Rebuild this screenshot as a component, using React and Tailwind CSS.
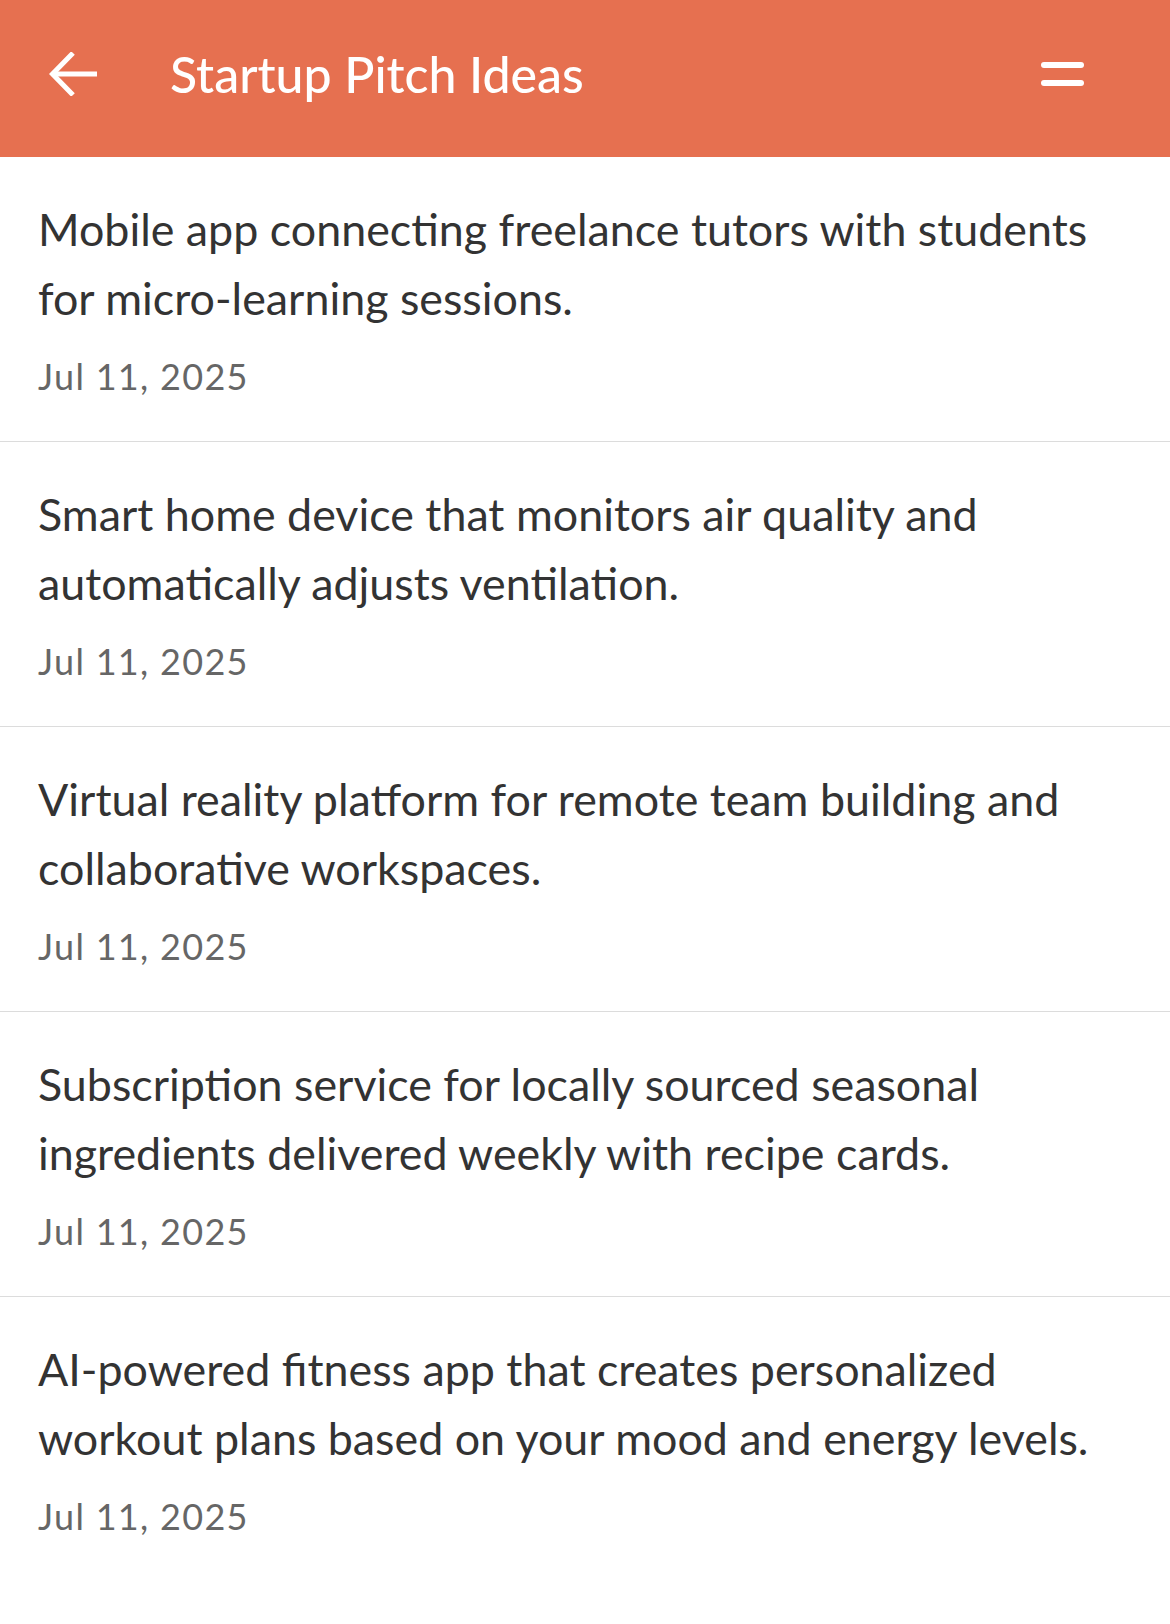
const ideas = [
  "Mobile app connecting freelance tutors with students for micro-learning sessions.",
  "Smart home device that monitors air quality and automatically adjusts ventilation.",
  "Virtual reality platform for remote team building and collaborative workspaces.",
  "Subscription service for locally sourced seasonal ingredients delivered weekly with recipe cards.",
  "AI-powered fitness app that creates personalized workout plans based on your mood and energy levels.",
];

const BackArrow = () => (
  <svg width="48" height="44" viewBox="0 0 48 44" fill="none" stroke="white" strokeWidth="5">
    <path d="M3 22 H48" />
    <path d="M24 1 L3.5 22 L24 43" />
  </svg>
);

export default function App() {
  return (
    <div className="min-h-screen bg-white font-['Lato',sans-serif]">
      <header className="h-[157px] bg-[#e67050] flex items-center pl-[49px] pb-[9px]">
        <button className="flex items-center justify-center">
          <BackArrow />
        </button>
        <h1 className="ml-[73px] text-white text-[50px] font-medium leading-none">
          Startup Pitch Ideas
        </h1>
        <button className="ml-auto mr-[86px] flex flex-col gap-[12px]">
          <span className="block w-[43px] h-[6px] rounded-full bg-white" />
          <span className="block w-[43px] h-[6px] rounded-full bg-white" />
        </button>
      </header>

      <main>
        {ideas.map((text, i) => (
          <div key={i} className="border-b border-[#dcdcdc] px-[38px] pt-[38px] pb-[35px] last:border-b-0">
            <p className="text-[#333333] text-[44.8px] leading-[69px]">{text}</p>
            <p className="mt-[13px] text-[#666666] text-[36px] tracking-[1.3px] leading-[60px]">
              Jul 11, 2025
            </p>
          </div>
        ))}
      </main>
    </div>
  );
}
